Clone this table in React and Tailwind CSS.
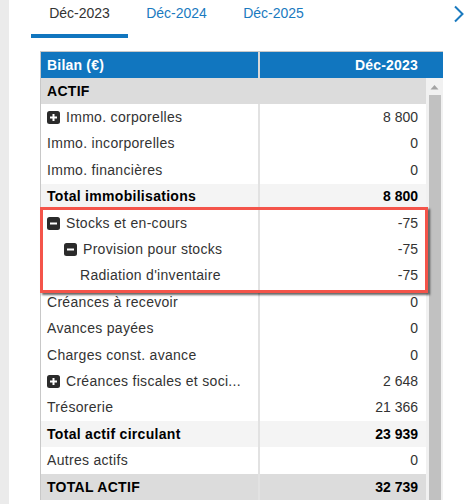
import React from "react";

const rows = [
  { label: "ACTIF", value: "", kind: "section" },
  { label: "Immo. corporelles", value: "8 800", icon: "plus" },
  { label: "Immo. incorporelles", value: "0" },
  { label: "Immo. financières", value: "0" },
  { label: "Total immobilisations", value: "8 800", kind: "total" },
  { label: "Stocks et en-cours", value: "-75", icon: "minus" },
  { label: "Provision pour stocks", value: "-75", icon: "minus", indent: 1 },
  { label: "Radiation d'inventaire", value: "-75", indent: 2 },
  { label: "Créances à recevoir", value: "0" },
  { label: "Avances payées", value: "0" },
  { label: "Charges const. avance", value: "0" },
  { label: "Créances fiscales et soci...", value: "2 648", icon: "plus" },
  { label: "Trésorerie", value: "21 366" },
  { label: "Total actif circulant", value: "23 939", kind: "total" },
  { label: "Autres actifs", value: "0" },
  { label: "TOTAL ACTIF", value: "32 739", kind: "grand" },
];

function Box({ type }) {
  return (
    <svg width="13" height="13" viewBox="0 0 13 13" className="shrink-0">
      <rect x="0" y="0" width="13" height="13" rx="2.5" fill="#2b2b2b" />
      <rect x="3" y="5.5" width="7" height="2" fill="#fff" />
      {type === "plus" && <rect x="5.5" y="3" width="2" height="7" fill="#fff" />}
    </svg>
  );
}

export default function App() {
  return (
    <div
      className="w-[474px] h-[504px] flex overflow-hidden bg-white text-[14px]"
      style={{ fontFamily: '"Liberation Sans", Arial, sans-serif' }}
    >
      <div className="w-[9px] shrink-0 bg-[#ebebeb]" />
      <div className="relative flex-1 flex flex-col">
        {/* Tabs */}
        <div className="h-[51px] flex pl-[22px] relative">
          <div className="w-[97px] h-[38px] flex items-start justify-center pt-[3px] text-[#333] border-b-[4px] border-[#1176bf]">
            Déc-2023
          </div>
          <div className="w-[97px] h-[38px] flex items-start justify-center pt-[3px] text-[#1a7abf]">
            Déc-2024
          </div>
          <div className="w-[97px] h-[38px] flex items-start justify-center pt-[3px] text-[#1a7abf]">
            Déc-2025
          </div>
          <svg
            className="absolute left-[444px] top-[5px]"
            width="12"
            height="18"
            viewBox="0 0 12 18"
          >
            <path d="M2 1.5 L9.5 9 L2 16.5" fill="none" stroke="#1a7abf" strokeWidth="2" />
          </svg>
        </div>

        {/* Table */}
        <div className="ml-[31px] w-[403px] border-l border-t border-[#c8c8c8] flex flex-col">
          <div className="h-[26px] flex bg-[#1176bf] text-white font-bold">
            <div className="w-[217px] flex items-center pl-[6px] tracking-[0.2px]">Bilan (€)</div>
            <div className="w-[2px] bg-[#d8d8d8]" />
            <div className="flex-1 flex items-center justify-end pr-[25px] tracking-[0.2px]">Déc-2023</div>
          </div>
          <div className="flex">
            <div className="w-[385px] flex flex-col">
              {rows.map((r, i) => {
                const bg =
                  r.kind === "section" || r.kind === "grand"
                    ? "bg-[#dcdcdc]"
                    : r.kind === "total"
                    ? "bg-[#f4f4f4]"
                    : "bg-white";
                const bold = r.kind ? "font-bold text-black" : "text-[#333]";
                const pl = r.indent === 1 ? "pl-[23px]" : r.indent === 2 ? "pl-[39px]" : "pl-[6px]";
                return (
                  <div key={i} className={`h-[26.4px] flex ${bg} ${bold}`}>
                    <div className={`w-[217px] flex items-center gap-[6px] whitespace-nowrap ${pl}`}>
                      {r.icon && <Box type={r.icon} />}
                      <span className="tracking-[0.3px]">{r.label}</span>
                    </div>
                    <div
                      className={`w-[2px] ${
                        r.kind === "section" ? "bg-[#dcdcdc]" : "bg-[#e2e2e2]"
                      }`}
                    />
                    <div className="flex-1 flex items-center justify-end pr-[8px]">{r.value}</div>
                  </div>
                );
              })}
            </div>
            <div className="w-[17px] bg-[#f1f1f1] flex flex-col items-center">
              <svg width="9" height="6" viewBox="0 0 9 6" className="mt-[6px]">
                <path d="M0.5 5.5 L4.5 1 L8.5 5.5 Z" fill="#a3a3a3" />
              </svg>
              <div className="mt-[5px] w-[12px] flex-1 bg-[#c1c1c1]" />
            </div>
          </div>
        </div>

        {/* Highlight overlay */}
        <div className="absolute left-[31px] top-[207px] w-[388px] h-[86px] border-[3px] border-[#f4544a] shadow-[2px_2px_2px_rgba(0,0,0,0.6)] pointer-events-none" />
      </div>
    </div>
  );
}
